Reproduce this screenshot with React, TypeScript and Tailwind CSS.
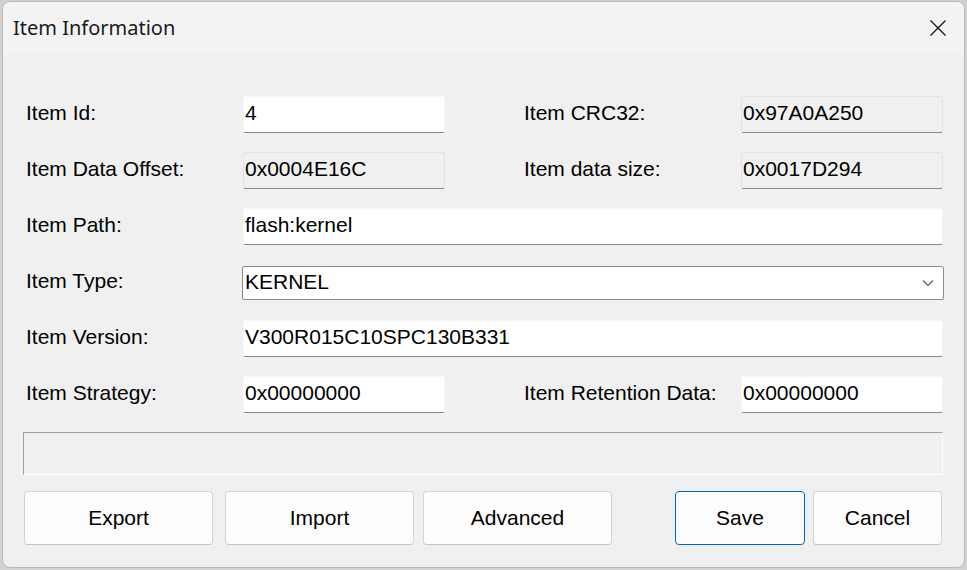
import React from "react";

const lbl = "text-[21px] leading-none text-black";

function Input({ value, width, readOnly }: { value: string; width: string; readOnly?: boolean }) {
  return (
    <div
      className={
        (readOnly
          ? "bg-[#f0f0f0] border border-[#e2e2e2] border-b-[#8a8a8a] "
          : "bg-white border border-[#f6f6f6] border-b-[#8a8a8a] ") +
        width +
        " h-[37px] flex items-center pl-[1px] pb-[5px] rounded-[2px]"
      }
    >
      <span className={lbl}>{value}</span>
    </div>
  );
}

function Btn({ label, width, primary }: { label: string; width: string; primary?: boolean }) {
  return (
    <button
      className={
        width +
        " h-[54px] rounded-[4px] bg-[#fdfdfd] text-[21px] text-black flex items-center justify-center border " +
        (primary ? "border-[#0067c0]" : "border-[#d4d4d4] border-b-[#c4c4c4]")
      }
    >
      {label}
    </button>
  );
}

export default function App() {
  return (
    <div
      className="w-[967px] h-[570px] bg-[#d2d2d2] overflow-hidden pt-[1px] pl-[2px]"
      style={{ fontFamily: '"Liberation Sans", Arial, sans-serif' }}
    >
      <div className="w-[963px] h-[567px] rounded-[8px] border border-[#b9b9b9] bg-[#f0f0f0] overflow-hidden flex flex-col">
        {/* title bar */}
        <div className="h-[51px] bg-[#f3f3f3] flex items-center justify-between pl-[10px] pr-[17px] shrink-0">
          <span
            className="text-[20px] text-[#1a1a1a]"
            style={{ fontFamily: '"Noto Sans", "Open Sans", sans-serif' }}
          >
            Item Information
          </span>
          <svg width="18" height="18" viewBox="0 0 18 18">
            <path d="M1.5 1.5 L16.5 16.5 M16.5 1.5 L1.5 16.5" stroke="#1a1a1a" strokeWidth="1.4" fill="none" />
          </svg>
        </div>

        {/* body */}
        <div className="flex flex-col pt-[43px] pl-[23px]">
          {/* row 1 */}
          <div className="flex items-center h-[37px]">
            <div className={lbl + " w-[217px] pb-[5px]"}>Item Id:</div>
            <Input value="4" width="w-[202px]" />
            <div className="w-[79px]" />
            <div className={lbl + " w-[217px] pb-[5px]"}>Item CRC32:</div>
            <Input value="0x97A0A250" width="w-[202px]" readOnly />
          </div>
          {/* row 2 */}
          <div className="flex items-center h-[37px] mt-[19px]">
            <div className={lbl + " w-[217px] pb-[5px]"}>Item Data Offset:</div>
            <Input value="0x0004E16C" width="w-[202px]" readOnly />
            <div className="w-[79px]" />
            <div className={lbl + " w-[217px] pb-[5px]"}>Item data size:</div>
            <Input value="0x0017D294" width="w-[202px]" readOnly />
          </div>
          {/* row 3 */}
          <div className="flex items-center h-[37px] mt-[19px]">
            <div className={lbl + " w-[217px] pb-[5px]"}>Item Path:</div>
            <Input value="flash:kernel" width="w-[700px]" />
          </div>
          {/* row 4 */}
          <div className="flex items-center h-[37px] mt-[19px]">
            <div className={lbl + " w-[216px] pb-[4px]"}>Item Type:</div>
            <div className="w-[702px] h-[34px] bg-white border border-[#8c8c8c] rounded-[2px] flex items-center justify-between pl-[2px] pr-[9px]">
              <span className={lbl + " pb-[3px]"}>KERNEL</span>
              <svg width="12" height="8" viewBox="0 0 12 8">
                <path d="M1 1.5 L6 6.5 L11 1.5" stroke="#5a5a5a" strokeWidth="1.1" fill="none" />
              </svg>
            </div>
          </div>
          {/* row 5 */}
          <div className="flex items-center h-[37px] mt-[19px]">
            <div className={lbl + " w-[217px] pb-[5px]"}>Item Version:</div>
            <Input value="V300R015C10SPC130B331" width="w-[700px]" />
          </div>
          {/* row 6 */}
          <div className="flex items-center h-[37px] mt-[19px]">
            <div className={lbl + " w-[217px] pb-[5px]"}>Item Strategy:</div>
            <Input value="0x00000000" width="w-[202px]" />
            <div className="w-[79px]" />
            <div className={lbl + " w-[217px] pb-[5px] whitespace-nowrap overflow-hidden"}>Item Retention Data:</div>
            <Input value="0x00000000" width="w-[202px]" />
          </div>
          {/* status panel */}
          <div className="w-[920px] h-[43px] mt-[19px] -ml-[3px] bg-[#f0f0f0] border border-t-[#a0a0a0] border-l-[#a0a0a0] border-b-white border-r-white" />
          {/* buttons */}
          <div className="flex items-center mt-[16px] -ml-[2px]">
            <Btn label="Export" width="w-[189px]" />
            <div className="w-[12px]" />
            <Btn label="Import" width="w-[189px]" />
            <div className="w-[9px]" />
            <Btn label="Advanced" width="w-[189px]" />
            <div className="w-[63px]" />
            <Btn label="Save" width="w-[130px]" primary />
            <div className="w-[8px]" />
            <Btn label="Cancel" width="w-[129px]" />
          </div>
        </div>
      </div>
    </div>
  );
}
